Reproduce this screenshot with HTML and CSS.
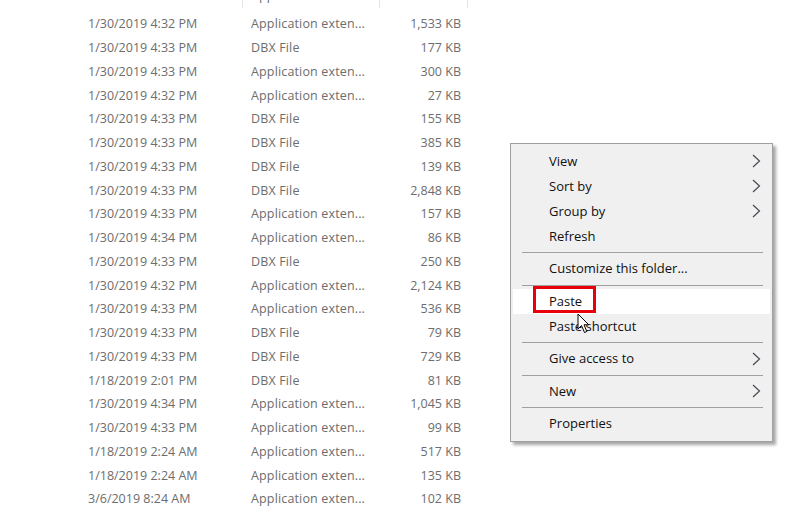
FILE: index.html
```html
<!DOCTYPE html>
<html lang="en">
<head>
    <meta charset="UTF-8" />
    <title>Folder contents</title>
    <link rel="stylesheet" href="styles.css">
</head>
<body>
    <div class="files">
        <div class="cut">
            <div class="row">
                <span class="date">1/30/2019 4:33 PM</span>
                <span class="type">Application exten...</span>
                <span class="size">64 KB</span>
            </div>
        </div>
        <div class="row"><span class="date">1/30/2019 4:32 PM</span><span class="type">Application exten...</span><span class="size">1,533 KB</span></div>
        <div class="row"><span class="date">1/30/2019 4:33 PM</span><span class="type">DBX File</span><span class="size">177 KB</span></div>
        <div class="row"><span class="date">1/30/2019 4:33 PM</span><span class="type">Application exten...</span><span class="size">300 KB</span></div>
        <div class="row"><span class="date">1/30/2019 4:32 PM</span><span class="type">Application exten...</span><span class="size">27 KB</span></div>
        <div class="row"><span class="date">1/30/2019 4:33 PM</span><span class="type">DBX File</span><span class="size">155 KB</span></div>
        <div class="row"><span class="date">1/30/2019 4:33 PM</span><span class="type">DBX File</span><span class="size">385 KB</span></div>
        <div class="row"><span class="date">1/30/2019 4:33 PM</span><span class="type">DBX File</span><span class="size">139 KB</span></div>
        <div class="row"><span class="date">1/30/2019 4:33 PM</span><span class="type">DBX File</span><span class="size">2,848 KB</span></div>
        <div class="row"><span class="date">1/30/2019 4:33 PM</span><span class="type">Application exten...</span><span class="size">157 KB</span></div>
        <div class="row"><span class="date">1/30/2019 4:34 PM</span><span class="type">Application exten...</span><span class="size">86 KB</span></div>
        <div class="row"><span class="date">1/30/2019 4:33 PM</span><span class="type">DBX File</span><span class="size">250 KB</span></div>
        <div class="row"><span class="date">1/30/2019 4:32 PM</span><span class="type">Application exten...</span><span class="size">2,124 KB</span></div>
        <div class="row"><span class="date">1/30/2019 4:33 PM</span><span class="type">Application exten...</span><span class="size">536 KB</span></div>
        <div class="row"><span class="date">1/30/2019 4:33 PM</span><span class="type">DBX File</span><span class="size">79 KB</span></div>
        <div class="row"><span class="date">1/30/2019 4:33 PM</span><span class="type">DBX File</span><span class="size">729 KB</span></div>
        <div class="row"><span class="date">1/18/2019 2:01 PM</span><span class="type">DBX File</span><span class="size">81 KB</span></div>
        <div class="row"><span class="date">1/30/2019 4:34 PM</span><span class="type">Application exten...</span><span class="size">1,045 KB</span></div>
        <div class="row"><span class="date">1/30/2019 4:33 PM</span><span class="type">Application exten...</span><span class="size">99 KB</span></div>
        <div class="row"><span class="date">1/18/2019 2:24 AM</span><span class="type">Application exten...</span><span class="size">517 KB</span></div>
        <div class="row"><span class="date">1/18/2019 2:24 AM</span><span class="type">Application exten...</span><span class="size">135 KB</span></div>
        <div class="row"><span class="date">3/6/2019 8:24 AM</span><span class="type">Application exten...</span><span class="size">102 KB</span></div>
    </div>

    <div class="menu">
        <div class="item">View
            <svg class="arrow" width="9" height="14" viewBox="0 0 9 14"><polyline points="1,1 7.5,7 1,13" /></svg>
        </div>
        <div class="item">Sort by
            <svg class="arrow" width="9" height="14" viewBox="0 0 9 14"><polyline points="1,1 7.5,7 1,13" /></svg>
        </div>
        <div class="item">Group by
            <svg class="arrow" width="9" height="14" viewBox="0 0 9 14"><polyline points="1,1 7.5,7 1,13" /></svg>
        </div>
        <div class="item">Refresh</div>
        <div class="sep"></div>
        <div class="item">Customize this folder...</div>
        <div class="sep"></div>
        <div class="item hover">Paste</div>
        <div class="item">Paste shortcut</div>
        <div class="sep"></div>
        <div class="item">Give access to
            <svg class="arrow" width="9" height="14" viewBox="0 0 9 14"><polyline points="1,1 7.5,7 1,13" /></svg>
        </div>
        <div class="sep"></div>
        <div class="item">New
            <svg class="arrow" width="9" height="14" viewBox="0 0 9 14"><polyline points="1,1 7.5,7 1,13" /></svg>
        </div>
        <div class="sep"></div>
        <div class="item">Properties</div>
        <div class="mark"></div>
    </div>

    <svg class="cursor" width="14" height="21" viewBox="0 0 14 21">
        <path d="M1,1 L1,16 L4.5,12.5 L7.5,19.5 L9.8,18.5 L7,11.8 L11.8,11.8 Z" />
    </svg>
</body>
</html>
```

FILE: styles.css
```css
body {
    margin: 0;
    background: #fff;
    font-family: 'Open Sans', 'Noto Sans', sans-serif;
    font-size: 12.5px;
    color: #6d6d6d;
    overflow: hidden;
}

.files {
    padding-left: 80px;
}

.cut {
    height: 12px;
    overflow: hidden;
}

.cut .row {
    margin-top: -16px;
}

.cut .date,
.cut .type,
.cut .size {
    border-right: 1px solid #e5e5e5;
}

.row {
    display: flex;
    height: 23.75px;
    align-items: center;
    white-space: nowrap;
}

.date {
    width: 163px;
    padding-left: 8px;
    box-sizing: border-box;
    height: 100%;
    display: flex;
    align-items: center;
}

.type {
    width: 137px;
    padding-left: 8px;
    box-sizing: border-box;
    height: 100%;
    display: flex;
    align-items: center;
    letter-spacing: 0.15px;
}

.size {
    width: 88px;
    padding-right: 7px;
    box-sizing: border-box;
    height: 100%;
    display: flex;
    align-items: center;
    justify-content: flex-end;
}

.menu {
    position: absolute;
    left: 510px;
    top: 143px;
    width: 261px;
    padding: 4.5px 0 5px;
    background: #f0f0f0;
    border: 1px solid #a0a0a0;
    box-shadow: 3px 3px 3px rgba(0, 0, 0, 0.35);
    color: #111;
    font-size: 13px;
}

.item {
    position: relative;
    height: 25px;
    line-height: 25px;
    margin: 0 2px;
    padding-left: 36px;
}

.item.hover {
    background: #fff;
}

.arrow {
    position: absolute;
    right: 9px;
    top: 5.5px;
}

.arrow polyline {
    fill: none;
    stroke: #4a4a55;
    stroke-width: 1.2;
}

.sep {
    height: 1px;
    background: #a0a0a0;
    margin: 3.5px 9px 3px 11px;
}

.mark {
    position: absolute;
    left: 22px;
    top: 142px;
    width: 57px;
    height: 21px;
    border: 3px solid #e8000b;
}

.cursor {
    position: absolute;
    left: 577px;
    top: 313px;
}

.cursor path {
    fill: #fff;
    stroke: #000;
    stroke-width: 1;
    stroke-linejoin: miter;
}
```
